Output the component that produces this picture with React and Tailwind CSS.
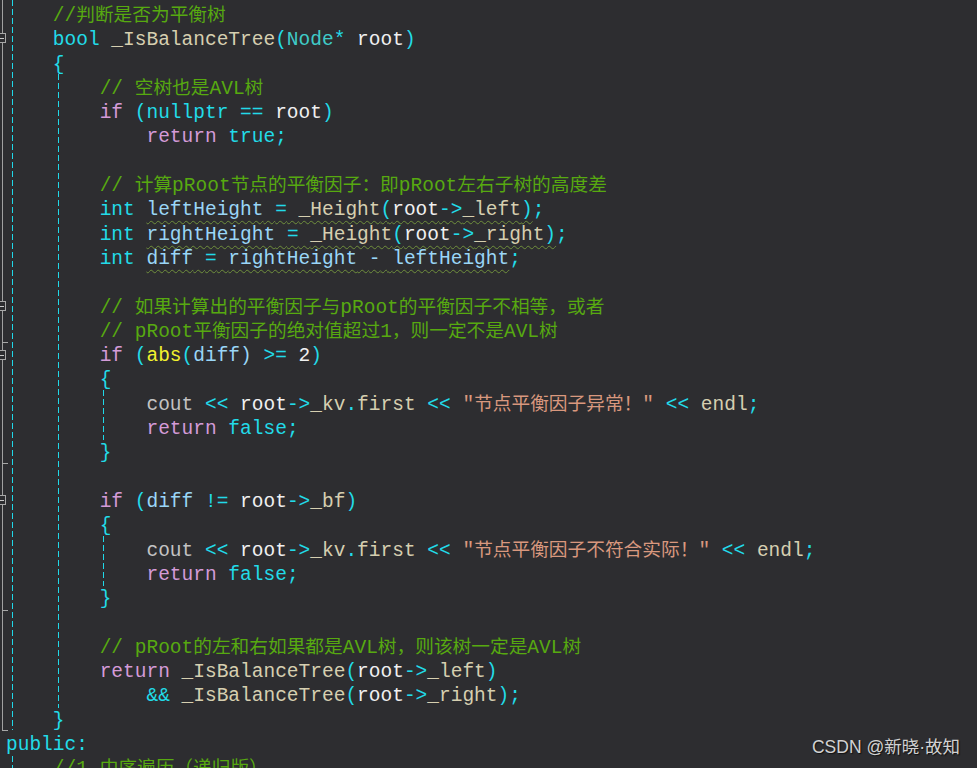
import React from "react";

// token colours
const C = "text-[#57a910]"; // comment
const K = "text-[#22dbe8]"; // keyword / operator
const P = "text-[#d49bd8]"; // control keyword
const T = "text-[#3fcbc8]"; // type
const W = "text-[#f0f0f0]"; // plain / local
const F = "text-[#d6cfb0]"; // function / member
const V = "text-[#9ad6f7]"; // variable
const Y = "text-[#f2f22e]"; // builtin fn
const G = "text-[#c3c3c3]"; // cout
const S = "text-[#d9987e]"; // string

const sp = n => [" ".repeat(n), W];

const lines = [
  [sp(4), ["//判断是否为平衡树", C]],
  [sp(4), ["bool", K], [" ", W], ["_IsBalanceTree", F], ["(", K], ["Node", T], ["*", K], [" ", W], ["root", W], [")", K]],
  [sp(4), ["{", K]],
  [sp(8), ["// 空树也是AVL树", C]],
  [sp(8), ["if", P], [" ", W], ["(", K], ["nullptr", K], [" ", W], ["==", K], [" ", W], ["root", W], [")", K]],
  [sp(12), ["return", P], [" ", W], ["true", K], [";", K]],
  [],
  [sp(8), ["// 计算pRoot节点的平衡因子：即pRoot左右子树的高度差", C]],
  [sp(8), ["int", K], [" ", W], { wavy: [["leftHeight", V], [" ", W], ["=", K], [" ", W], ["_Height", F], ["(", K], ["root", W], ["->", K], ["_left", F], [")", K]] }, [";", K]],
  [sp(8), ["int", K], [" ", W], { wavy: [["rightHeight", V], [" ", W], ["=", K], [" ", W], ["_Height", F], ["(", K], ["root", W], ["->", K], ["_right", F], [")", K]] }, [";", K]],
  [sp(8), ["int", K], [" ", W], { wavy: [["diff", V], [" ", W], ["=", K], [" ", W], ["rightHeight", V], [" ", W], ["-", V], [" ", W], ["leftHeight", V]] }, [";", K]],
  [],
  [sp(8), ["// 如果计算出的平衡因子与pRoot的平衡因子不相等，或者", C]],
  [sp(8), ["// pRoot平衡因子的绝对值超过1，则一定不是AVL树", C]],
  [sp(8), ["if", P], [" ", W], ["(", K], ["abs", Y], ["(", K], ["diff", V], [")", V], [" ", W], [">=", K], [" ", W], ["2", W], [")", K]],
  [sp(8), ["{", K]],
  [sp(12), ["cout", G], [" ", W], ["<<", K], [" ", W], ["root", W], ["->", K], ["_kv", F], [".", K], ["first", F], [" ", W], ["<<", K], [" ", W], ['"节点平衡因子异常！"', S], [" ", W], ["<<", K], [" ", W], ["endl", F], [";", K]],
  [sp(12), ["return", P], [" ", W], ["false", K], [";", K]],
  [sp(8), ["}", K]],
  [],
  [sp(8), ["if", P], [" ", W], ["(", K], ["diff", V], [" ", W], ["!=", K], [" ", W], ["root", W], ["->", K], ["_bf", F], [")", K]],
  [sp(8), ["{", K]],
  [sp(12), ["cout", G], [" ", W], ["<<", K], [" ", W], ["root", W], ["->", K], ["_kv", F], [".", K], ["first", F], [" ", W], ["<<", K], [" ", W], ['"节点平衡因子不符合实际！"', S], [" ", W], ["<<", K], [" ", W], ["endl", F], [";", K]],
  [sp(12), ["return", P], [" ", W], ["false", K], [";", K]],
  [sp(8), ["}", K]],
  [],
  [sp(8), ["// pRoot的左和右如果都是AVL树，则该树一定是AVL树", C]],
  [sp(8), ["return", P], [" ", W], ["_IsBalanceTree", F], ["(", K], ["root", W], ["->", K], ["_left", F], [")", K]],
  [sp(12), ["&&", K], [" ", W], ["_IsBalanceTree", F], ["(", K], ["root", W], ["->", K], ["_right", F], [")", K], [";", K]],
  [sp(4), ["}", K]],
  [["public:", K]],
  [sp(4), ["//1 中序遍历（递归版）", C]],
];

const CJK = /([\u3000-\u303f\u4e00-\u9fff\uff00-\uffef]+)/;

// CJK glyphs are narrower in the editor than 1em of the latin font
function Text({ text, cls }) {
  const parts = text.split(CJK).filter(Boolean);
  return (
    <span className={cls}>
      {parts.map((p, i) =>
        CJK.test(p) ? (
          <span key={i} className="text-[18.7px]">{p}</span>
        ) : (
          <React.Fragment key={i}>{p}</React.Fragment>
        )
      )}
    </span>
  );
}

function Token({ tok }) {
  if (tok.wavy) {
    return (
      <span className="underline decoration-wavy decoration-[#6f8f3c] decoration-1 underline-offset-[5px]">
        {tok.wavy.map((t, i) => (
          <Text key={i} text={t[0]} cls={t[1]} />
        ))}
      </span>
    );
  }
  return <Text text={tok[0]} cls={tok[1]} />;
}

function Guide({ x, top, height }) {
  return (
    <div
      className="absolute w-px bg-[linear-gradient(to_bottom,#20d8e8_0,#20d8e8_6px,transparent_6px,transparent_9px)] bg-[length:1px_9px] bg-repeat-y"
      style={{ left: x, top, height }}
    />
  );
}

function FoldBox({ y }) {
  return (
    <div
      className="absolute left-[-4px] w-[10px] h-[10px] border border-[#a8a8a8] bg-[#2d2d30] flex items-center justify-center"
      style={{ top: y - 5 }}
    >
      <div className="w-[5px] h-px bg-[#c8c8c8]" />
    </div>
  );
}

function Tick({ y }) {
  return <div className="absolute left-[2px] w-[6px] h-px bg-[#a8a8a8]" style={{ top: y }} />;
}

export default function App() {
  return (
    <div className="relative w-[977px] h-[768px] overflow-hidden bg-[#2d2d30]">
      {/* outlining margin */}
      <div className="absolute left-[2px] top-0 w-px h-[730px] bg-[#a0a0a0]" />
      <FoldBox y={38} />
      <FoldBox y={306} />
      <FoldBox y={355} />
      <FoldBox y={500} />
      <Tick y={342} />
      <Tick y={463} />
      <Tick y={610} />
      <Tick y={730} />

      {/* indent guides */}
      <Guide x={12} top={0} height={730} />
      <Guide x={12} top={756} height={20} />
      <Guide x={58} top={74} height={634} />
      <Guide x={103} top={390} height={50} />
      <Guide x={103} top={536} height={50} />

      <div className="pt-[4px] pl-[6px] font-['Liberation_Mono','Noto_Sans_CJK_SC',monospace] text-[19.5px] whitespace-pre">
        {lines.map((ln, i) => (
          <div key={i} className="h-[24.3px] leading-[24.3px]">
            {ln.map((tok, j) => (
              <Token key={j} tok={tok} />
            ))}
          </div>
        ))}
      </div>

      <div className="absolute right-[17px] bottom-[8px] font-['Liberation_Sans','Noto_Sans_CJK_SC',sans-serif] text-[17.5px] text-[#d2d2d2] [text-shadow:1px_1px_1px_#111]">
        CSDN @新晓·故知
      </div>
    </div>
  );
}
